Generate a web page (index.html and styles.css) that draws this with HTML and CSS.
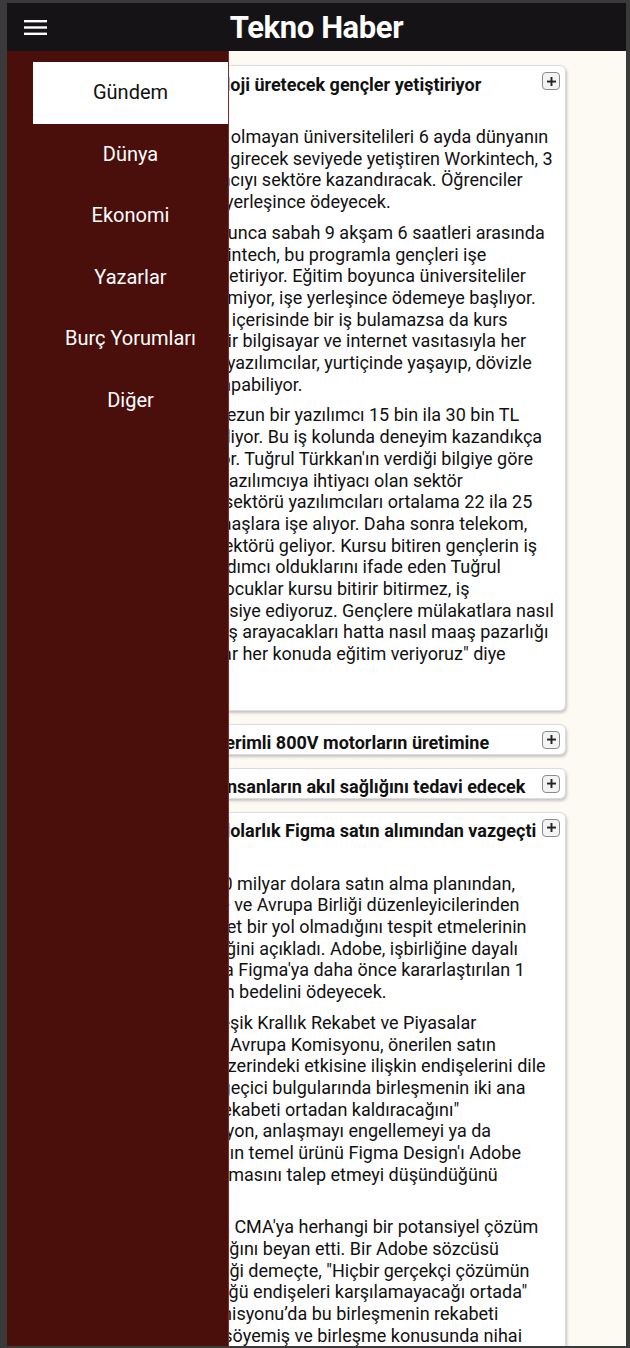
FILE: index.html
```html
<!DOCTYPE html>
<html lang="tr">
<head>
<meta charset="utf-8">
<title>Tekno Haber</title>
<link rel="stylesheet" href="styles.css">
</head>
<body>
<div class="app">
  <header class="topbar">
    <button class="menu-btn" aria-label="Menü">
      <svg width="23" height="15" viewBox="0 0 23 15"><rect x="0" y="0" width="23" height="2.4" fill="#fff"/><rect x="0" y="6.3" width="23" height="2.4" fill="#fff"/><rect x="0" y="12.6" width="23" height="2.4" fill="#fff"/></svg>
    </button>
    <h1 class="brand">Tekno Haber</h1>
    <span class="spacer"></span>
  </header>

  <main class="feed">
    <article class="card">
      <div class="card-head">
        <h2 class="card-title">Workintech, teknoloji üretecek gençler yetiştiriyor</h2>
        <button class="toggle" aria-label="Aç"><svg width="9" height="9" viewBox="0 0 9 9"><rect x="0" y="3.6" width="9" height="1.9" fill="#222"/><rect x="3.55" y="0" width="1.9" height="9" fill="#222"/></svg></button>
      </div>
      <div class="card-body">
        <p>Yazılım tecrübeleri olmayan üniversitelileri 6 ayda dünyanın<br>önemli şirketlerine girecek seviyede yetiştiren Workintech, 3<br>yılda 10 bin yazılımcıyı sektöre kazandıracak. Öğrenciler<br>eğitim ücretini işe yerleşince ödeyecek.</p>
        <p>Altı aylık süreç boyunca sabah 9 akşam 6 saatleri arasında<br>kursları açan Workintech, bu programla gençleri işe<br>şirkete hazır hale getiriyor. Eğitim boyunca üniversiteliler<br>kesinlikle para ödemiyor, işe yerleşince ödemeye başlıyor.<br>Öğrenci eğer bir yıl içerisinde bir iş bulamazsa da kurs<br>ücretini ödemez. Bir bilgisayar ve internet vasıtasıyla her<br>yerden çalışabilen yazılımcılar, yurtiçinde yaşayıp, dövizle<br>maaş kazanıp iş yapabiliyor.</p>
        <p>Kursu biten yeni mezun bir yazılımcı 15 bin ila 30 bin TL<br>arası ücretler alabiliyor. Bu iş kolunda deneyim kazandıkça<br>kazançlar da artıyor. Tuğrul Türkkan'ın verdiği bilgiye göre<br>Türkiye'de en çok yazılımcıya ihtiyacı olan sektör<br>finans. Bankacılık sektörü yazılımcıları ortalama 22 ila 25<br>bin TL arasında maaşlara işe alıyor. Daha sonra telekom,<br>e-ticaret ve oyun sektörü geliyor. Kursu bitiren gençlerin iş<br>bulmalarına da yardımcı olduklarını ifade eden Tuğrul<br>Türkkan "Bizdeki çocuklar kursu bitirir bitirmez, iş<br>onları firmalara tavsiye ediyoruz. Gençlere mülakatlara nasıl<br>hazırlanacaklarını iş arayacakları hatta nasıl maaş pazarlığı<br>yürütmelerine kadar her konuda eğitim veriyoruz" diye<br>konuştu.</p>
      </div>
    </article>

    <article class="card">
      <div class="card-head">
        <h2 class="card-title">Hyundai, yüksek verimli 800V motorların üretimine başladı</h2>
        <button class="toggle" aria-label="Aç"><svg width="9" height="9" viewBox="0 0 9 9"><rect x="0" y="3.6" width="9" height="1.9" fill="#222"/><rect x="3.55" y="0" width="1.9" height="9" fill="#222"/></svg></button>
      </div>
    </article>

    <article class="card">
      <div class="card-head">
        <h2 class="card-title">Yapay zeka robot insanların akıl sağlığını tedavi edecek</h2>
        <button class="toggle" aria-label="Aç"><svg width="9" height="9" viewBox="0 0 9 9"><rect x="0" y="3.6" width="9" height="1.9" fill="#222"/><rect x="3.55" y="0" width="1.9" height="9" fill="#222"/></svg></button>
      </div>
    </article>

    <article class="card">
      <div class="card-head">
        <h2 class="card-title">Adobe, 20 milyar dolarlık Figma satın alımından vazgeçti</h2>
        <button class="toggle" aria-label="Aç"><svg width="9" height="9" viewBox="0 0 9 9"><rect x="0" y="3.6" width="9" height="1.9" fill="#222"/><rect x="3.55" y="0" width="1.9" height="9" fill="#222"/></svg></button>
      </div>
      <div class="card-body">
        <p>Adobe, Figma'yı, 20 milyar dolara satın alma planından,<br>anlaşmayı İngiltere ve Avrupa Birliği düzenleyicilerinden<br>onayı alması için net bir yol olmadığını tespit etmelerinin<br>nedeniyle vazgeçtiğini açıkladı. Adobe, işbirliğine dayalı<br>anlaşması uyarınca Figma'ya daha önce kararlaştırılan 1<br>milyar dolarlık fesih bedelini ödeyecek.</p>
        <p>Bu yıl başında Birleşik Krallık Rekabet ve Piyasalar<br>Otoritesi (CMA) ve Avrupa Komisyonu, önerilen satın<br>alımın ilgili pazar üzerindeki etkisine ilişkin endişelerini dile<br>getiriyordu. CMA, geçici bulgularında birleşmenin iki ana<br>ürünü arasındaki rekabeti ortadan kaldıracağını"<br>açıklamıştı. Komisyon, anlaşmayı engellemeyi ya da<br>Adobe'den Figma'nın temel ürünü Figma Design'ı Adobe<br>Express'ten de ayırmasını talep etmeyi düşündüğünü<br>belirtmişti.</p>
        <p>Adobe geçen hafta CMA'ya herhangi bir potansiyel çözüm<br>önerisi sunmayacağını beyan etti. Bir Adobe sözcüsü<br>TechCrunch'a verdiği demeçte, "Hiçbir gerçekçi çözümün<br>iki otoritenin gördüğü endişeleri karşılamayacağı ortada"<br>olduğu için de Komisyonu’da bu birleşmenin rekabeti<br>zayıflatacağını da söyemiş ve birleşme konusunda nihai<br>kararını vermişti.</p>
      </div>
    </article>
  </main>

  <nav class="drawer">
    <ul class="drawer-list">
      <li class="drawer-item active"><a href="#">Gündem</a></li>
      <li class="drawer-item"><a href="#">Dünya</a></li>
      <li class="drawer-item"><a href="#">Ekonomi</a></li>
      <li class="drawer-item"><a href="#">Yazarlar</a></li>
      <li class="drawer-item"><a href="#">Burç Yorumları</a></li>
      <li class="drawer-item"><a href="#">Diğer</a></li>
    </ul>
  </nav>
</div>
</body>
</html>
```

FILE: styles.css
```css
* { box-sizing: border-box; }

body {
  margin: 0;
  background: #3a3a3a;
  font-family: Roboto, "Noto Sans", "Liberation Sans", sans-serif;
}

.app {
  position: relative;
  margin: 3px 4px 0 7px;
  height: 1343px;
  overflow: hidden;
  background: #fcfaf3;
}

.topbar {
  height: 48px;
  background: #151315;
  display: grid;
  grid-template-columns: 1fr auto 1fr;
  align-items: center;
}

.menu-btn {
  justify-self: start;
  margin-left: 17px;
  padding: 0;
  border: 0;
  background: none;
  display: flex;
}

.brand {
  margin: 0;
  color: #fff;
  font-size: 31px;
  font-weight: 700;
  line-height: 1;
  letter-spacing: -0.4px;
}

.feed {
  padding: 14px 60px 0 61px;
}

.card {
  background: #fff;
  border: 1px solid #dcdcdc;
  border-radius: 6px;
  box-shadow: 1px 2px 3px rgba(0, 0, 0, 0.22);
  margin-bottom: 13px;
}

.card-head {
  display: flex;
  align-items: flex-start;
  height: 29px;
  overflow: hidden;
  padding: 6px 5px 0 10px;
}

.card-title {
  flex: 1;
  margin: 1.8px 0 0 0;
  font-size: 18px;
  line-height: 21.7px;
  font-weight: 700;
  color: #111;
}

.toggle {
  flex: none;
  width: 18px;
  height: 18px;
  padding: 0;
  border: 1px solid #8a8a8a;
  border-radius: 4px;
  background: #f3f3f3;
  display: grid;
  place-items: center;
}

.toggle svg { display: block; }

.card-body {
  padding: 22px 2px 14px 10px;
  color: #111;
  font-size: 18px;
  line-height: 21.7px;
}

.card-body p {
  margin: 9px 0;
}

.drawer {
  position: absolute;
  top: 48px;
  left: 0;
  bottom: 0;
  width: 222px;
  background: #4a0e0b;
  border-right: 1px solid #8c2a28;
}

.drawer-list {
  list-style: none;
  margin: 11px 0 0;
  padding: 0 0 0 26px;
}

.drawer-item a {
  display: block;
  padding: 20px 0;
  line-height: 21.6px;
  font-size: 20px;
  color: #fff;
  text-align: center;
  text-decoration: none;
}

.drawer-item.active a {
  background: #fff;
  color: #111;
}
```
